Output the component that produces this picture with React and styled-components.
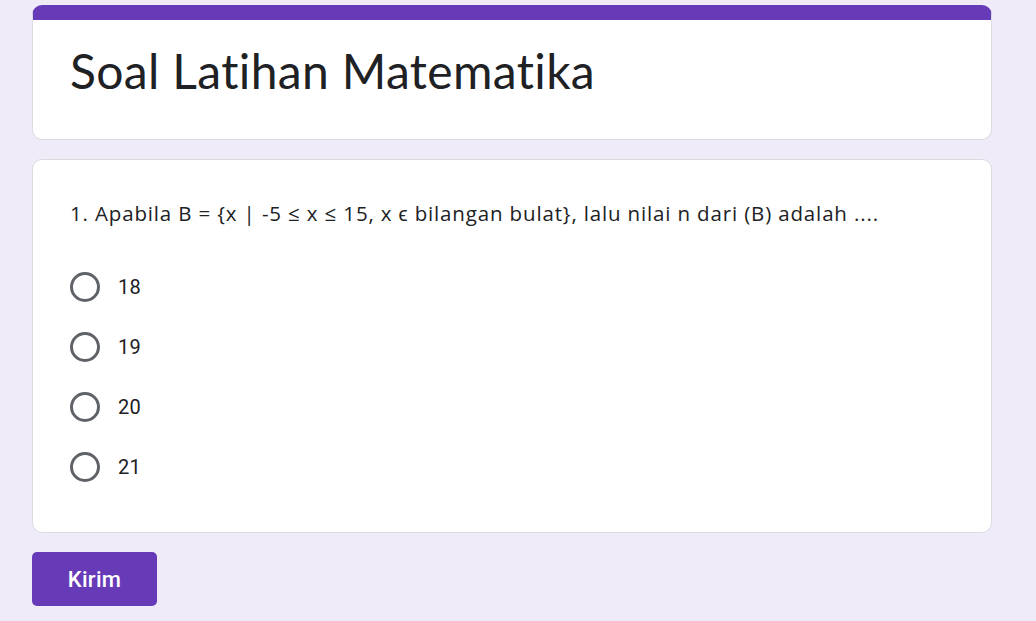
import React from "react";
import styled, { createGlobalStyle } from "styled-components";

const Global = createGlobalStyle`
  html, body { margin: 0; padding: 0; background: #efebf8; }
  body { font-family: "Lato", "Open Sans", sans-serif; }
`;

const Page = styled.main`
  display: flex;
  flex-direction: column;
  gap: 19px;
  width: 960px;
  margin-left: 32px;
  padding-top: 5px;
`;

const Card = styled.section`
  background: #fff;
  border: 1px solid #dadce0;
  border-radius: 10px;
  box-sizing: border-box;
  ${(p) => p.$accent && `border-top: 15px solid #673ab7;`}
`;

const HeaderCard = styled(Card)`
  height: 135px;
  padding: 19px 37px 0;
`;

const Title = styled.h1`
  margin: 0;
  font-family: "Lato", sans-serif;
  font-weight: 400;
  font-size: 48px;
  line-height: 64px;
  color: #202124;
  letter-spacing: 0.35px;
`;

const QuestionCard = styled(Card)`
  height: 374px;
  padding: 38px 37px 0;
`;

const Question = styled.div`
  font-family: "Open Sans", sans-serif;
  font-size: 20.5px;
  line-height: 30px;
  color: #202124;
  letter-spacing: 0.85px;
`;

const Options = styled.div`
  display: flex;
  flex-direction: column;
  margin-top: 29px;
`;

const Option = styled.label`
  display: flex;
  align-items: center;
  gap: 18px;
  height: 60px;
  cursor: pointer;
`;

const Radio = styled.span`
  width: 30px;
  height: 30px;
  box-sizing: border-box;
  border: 3px solid #5f6368;
  border-radius: 50%;
  flex: none;
`;

const OptionText = styled.span`
  font-family: "Roboto", sans-serif;
  font-size: 20px;
  color: #202124;
  letter-spacing: 0.2px;
`;

const Submit = styled.button`
  width: 125px;
  height: 54px;
  border: none;
  border-radius: 5px;
  background: #673ab7;
  color: #fff;
  font-family: "Roboto", sans-serif;
  font-weight: 500;
  font-size: 22px;
  letter-spacing: 0.3px;
  cursor: pointer;
`;

const options = ["18", "19", "20", "21"];

export default function App() {
  return (
    <>
      <Global />
      <Page>
        <HeaderCard $accent>
          <Title>Soal Latihan Matematika</Title>
        </HeaderCard>
        <QuestionCard>
          <Question>
            1. Apabila B = {"{"}x | -5 ≤ x ≤ 15, x ϵ bilangan bulat{"}"}, lalu nilai n dari (B) adalah ....
          </Question>
          <Options>
            {options.map((o) => (
              <Option key={o}>
                <Radio />
                <OptionText>{o}</OptionText>
              </Option>
            ))}
          </Options>
        </QuestionCard>
        <div>
          <Submit>Kirim</Submit>
        </div>
      </Page>
    </>
  );
}
